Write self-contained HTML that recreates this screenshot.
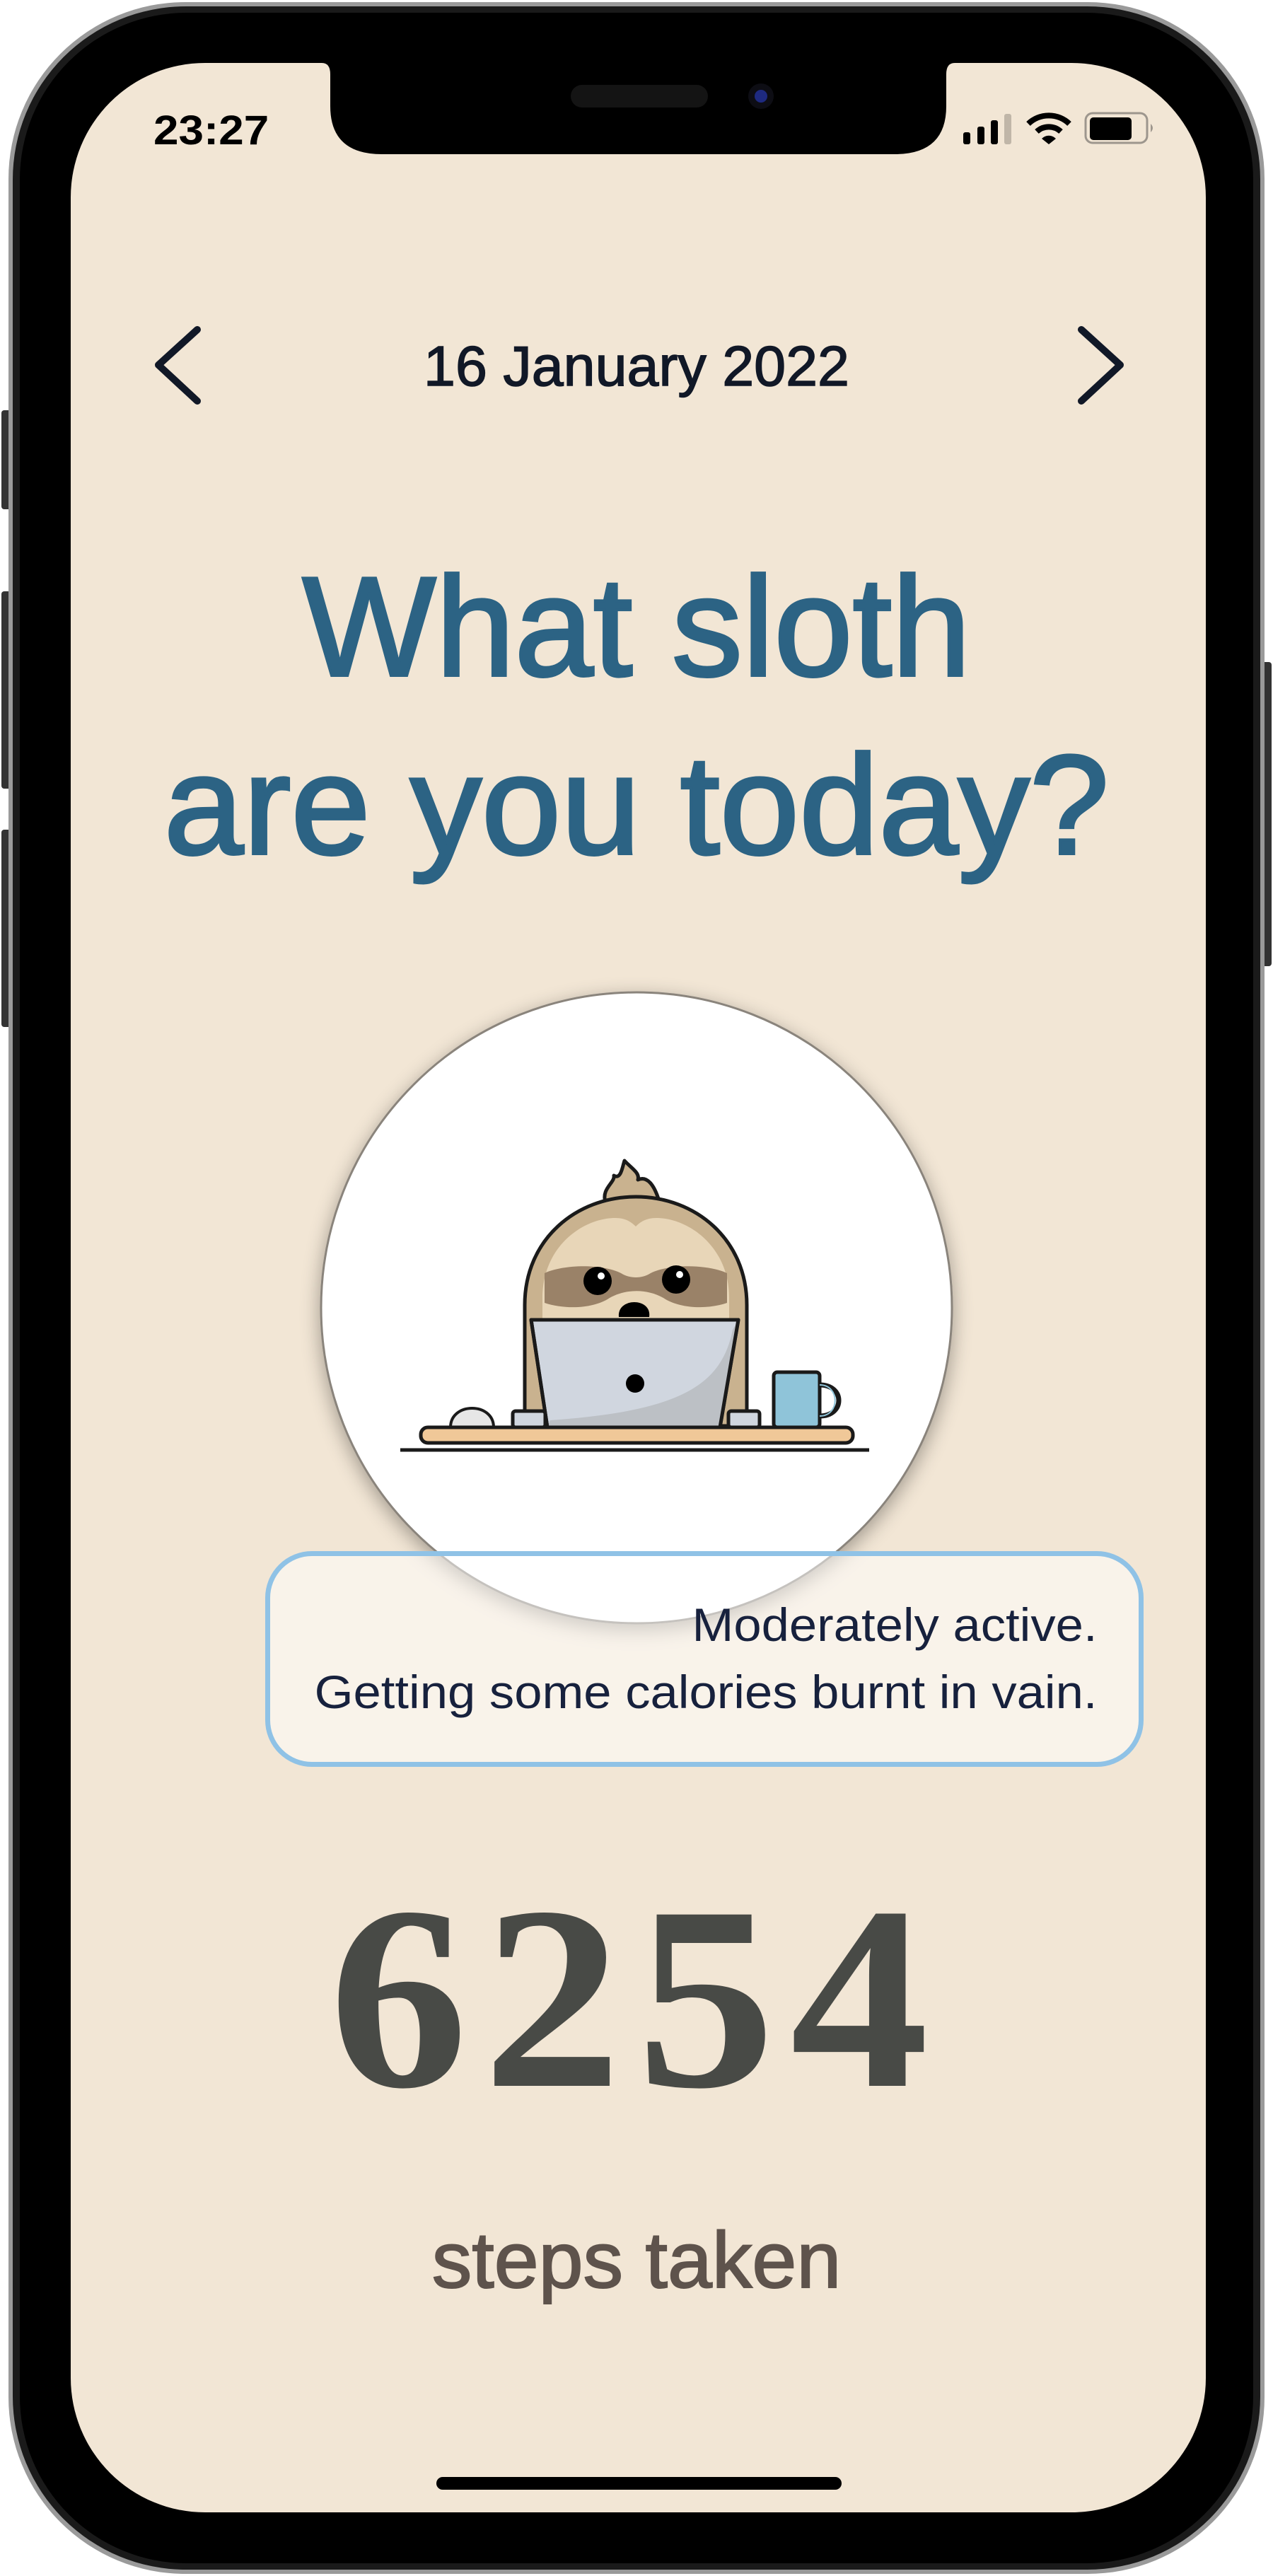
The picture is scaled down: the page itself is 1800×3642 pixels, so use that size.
<!DOCTYPE html>
<html><head><meta charset="utf-8"><style>
html,body{margin:0;padding:0;background:#fff;}
body{width:1800px;height:3642px;position:relative;overflow:hidden;font-family:"Liberation Sans",sans-serif;}
.t{position:absolute;white-space:nowrap;line-height:1;}
</style></head><body>
<svg width="1800" height="3642" viewBox="0 0 1800 3642" style="position:absolute;left:0;top:0">
<defs>
<filter id="sh" x="-20%" y="-20%" width="140%" height="140%"><feGaussianBlur in="SourceAlpha" stdDeviation="14"/><feOffset dy="8"/><feComponentTransfer><feFuncA type="linear" slope="0.35"/></feComponentTransfer><feMerge><feMergeNode/><feMergeNode in="SourceGraphic"/></feMerge></filter>
</defs>
<rect x="2" y="580" width="14" height="140" rx="4" fill="#333"/>
<rect x="2" y="836" width="14" height="279" rx="4" fill="#333"/>
<rect x="2" y="1173" width="14" height="279" rx="4" fill="#333"/>
<rect x="1784" y="936" width="14" height="430" rx="4" fill="#333"/>
<rect x="12" y="3" width="1776" height="3636" rx="250" fill="#9a9a9a"/>
<rect x="18" y="9" width="1764" height="3624" rx="245" fill="#1a1a1a"/>
<rect x="28" y="18" width="1744" height="3606" rx="236" fill="#000"/>
<rect x="100" y="89" width="1605" height="3463" rx="190" fill="#f2e6d5"/>
<path d="M455,89 Q467,89 467,105 L467,150 Q467,218 540,218 L1265,218 Q1338,218 1338,150 L1338,105 Q1338,89 1350,89 Z" fill="#000"/>
<rect x="807" y="120" width="194" height="32" rx="16" fill="#141414"/>
<circle cx="1076" cy="136" r="18" fill="#0d0d14"/>
<circle cx="1076" cy="136" r="9" fill="#1e2a80"/>
<rect x="1362" y="187" width="10" height="17" rx="3" fill="#000"/>
<rect x="1382" y="179" width="10" height="25" rx="3" fill="#000"/>
<rect x="1401" y="170" width="10" height="34" rx="3" fill="#000"/>
<rect x="1420" y="161" width="10" height="43" rx="3" fill="#c0b6a8"/>
<path d="M1454,175 A42,42 0 0 1 1512,175" stroke="#000" stroke-width="8" fill="none"/>
<path d="M1466,186 A25,25 0 0 1 1500,186" stroke="#000" stroke-width="8" fill="none"/>
<path d="M1473,196 L1483,204 L1493,196 A14,14 0 0 0 1473,196 Z" fill="#000"/>
<rect x="1535" y="160" width="87" height="42" rx="10" fill="none" stroke="#9d968d" stroke-width="3"/>
<rect x="1541" y="166" width="59" height="32" rx="5" fill="#000"/>
<path d="M1627,175 Q1633,181 1627,187 Z" fill="#9d968d"/>
<path d="M279,466 L224,516 L279,567" stroke="#111827" stroke-width="10" fill="none" stroke-linecap="round" stroke-linejoin="round"/>
<path d="M1529,466 L1584,516 L1529,567" stroke="#111827" stroke-width="10" fill="none" stroke-linecap="round" stroke-linejoin="round"/>
<circle cx="900" cy="1849" r="446" fill="#fff" stroke="#8a847c" stroke-width="3" filter="url(#sh)"/>
<g stroke="#1a1a1a" stroke-width="5" stroke-linejoin="round">
<path d="M856,1700 C850,1680 870,1672 868,1662 C878,1668 880,1650 883,1641 C893,1652 905,1658 902,1668 C915,1662 925,1675 932,1698 Z" fill="#c9b28f"/>
<path d="M742,2016 L742,1845 C742,1752 815,1692 899,1692 C983,1692 1056,1752 1056,1845 L1056,2016 Z" fill="#c9b28f"/>
<path d="M767,1880 L767,1835 C767,1762 825,1722 870,1722 C885,1722 893,1728 899,1734 C905,1728 913,1722 928,1722 C973,1722 1031,1762 1031,1835 L1031,1880 Z" fill="#e8d6b8" stroke="none"/>
<path d="M770,1800 C795,1788 850,1786 878,1800 C890,1808 908,1808 920,1800 C948,1786 1003,1788 1028,1800 L1028,1842 C1000,1852 960,1850 938,1835 C915,1822 885,1822 862,1835 C840,1850 800,1852 770,1842 Z" fill="#9a8268" stroke="none"/>
<ellipse cx="845" cy="1811" rx="20" ry="20" fill="#000" stroke="none"/>
<ellipse cx="956" cy="1809" rx="20" ry="20" fill="#000" stroke="none"/>
<circle cx="850" cy="1804" r="5" fill="#fff" stroke="none"/>
<circle cx="961" cy="1802" r="5" fill="#fff" stroke="none"/>
<path d="M875,1862 C872,1834 922,1834 918,1862 Z" fill="#000" stroke="none"/>
<rect x="725" y="1995" width="46" height="23" rx="4" fill="#d0d6df"/>
<rect x="1030" y="1995" width="44" height="23" rx="4" fill="#d0d6df"/>
<path d="M751,1866 L1044,1866 L1018,2018 L774,2018 Z" fill="#d0d6df"/>
<path d="M1036,1880 C1020,1960 960,1995 778,2008 L774,2018 L1018,2018 L1044,1866 Z" fill="#bcc0c5" stroke="none"/>
<path d="M751,1866 L1044,1866 L1018,2018 L774,2018 Z" fill="none"/>
<circle cx="898" cy="1956" r="13" fill="#000" stroke="none"/>
<path d="M637,2018 C637,1982 698,1982 698,2018 Z" fill="#e6e6e6" stroke-width="4"/>
<rect x="1094" y="1940" width="65" height="78" rx="5" fill="#8fc4d9"/>
<path d="M1159,1958 C1195,1958 1195,2002 1159,2002" fill="none" stroke-width="7"/>
<path d="M1159,1958 C1188,1958 1188,2002 1159,2002" fill="none" stroke="#8fc4d9" stroke-width="2"/>
<rect x="595" y="2018" width="611" height="22" rx="10" fill="#f0c898"/>
</g>
<line x1="566" y1="2050" x2="1229" y2="2050" stroke="#1a1a1a" stroke-width="5"/>
<rect x="617" y="3502" width="573" height="18" rx="9" fill="#000"/>
</svg>

<div class="t" style="left:217px;top:156px;font-size:58px;font-weight:bold;color:#000;transform:scaleX(1.1);transform-origin:left">23:27</div>
<div class="t" style="left:0;width:1800px;text-align:center;top:478px;font-size:80px;color:#111827;transform:scaleX(1.01);-webkit-text-stroke:1.5px #111827">16 January 2022</div>
<div class="t" style="left:0;width:1800px;text-align:center;top:787px;font-size:200px;color:#2c6384;transform:scaleX(1.0);-webkit-text-stroke:4px #2c6384">What sloth</div>
<div class="t" style="left:0;width:1800px;text-align:center;top:1039px;font-size:200px;color:#2c6384;transform:scaleX(1.01);-webkit-text-stroke:4px #2c6384">are you today?</div>

<div style="position:absolute;left:375px;top:2193px;width:1228px;height:291px;border:7px solid #8fc2e6;border-radius:66px;background:rgba(255,255,255,0.5);"></div>
<div class="t" style="right:248px;top:2264px;font-size:66px;color:#17213d;transform:scaleX(1.07);transform-origin:right">Moderately active.</div>
<div class="t" style="right:248px;top:2359px;font-size:66px;color:#17213d;transform:scaleX(1.07);transform-origin:right">Getting some calories burnt in vain.</div>

<div class="t" style="left:0;width:1800px;text-align:center;top:2640px;font-size:370px;font-weight:bold;font-family:'Liberation Serif',serif;color:#484a46;letter-spacing:20px;transform:scaleX(1.06)">6254</div>
<div class="t" style="left:0;width:1800px;text-align:center;top:3140px;font-size:112px;color:#5e534c;transform:scaleX(1.01);-webkit-text-stroke:2px #5e534c">steps taken</div>
</body></html>
